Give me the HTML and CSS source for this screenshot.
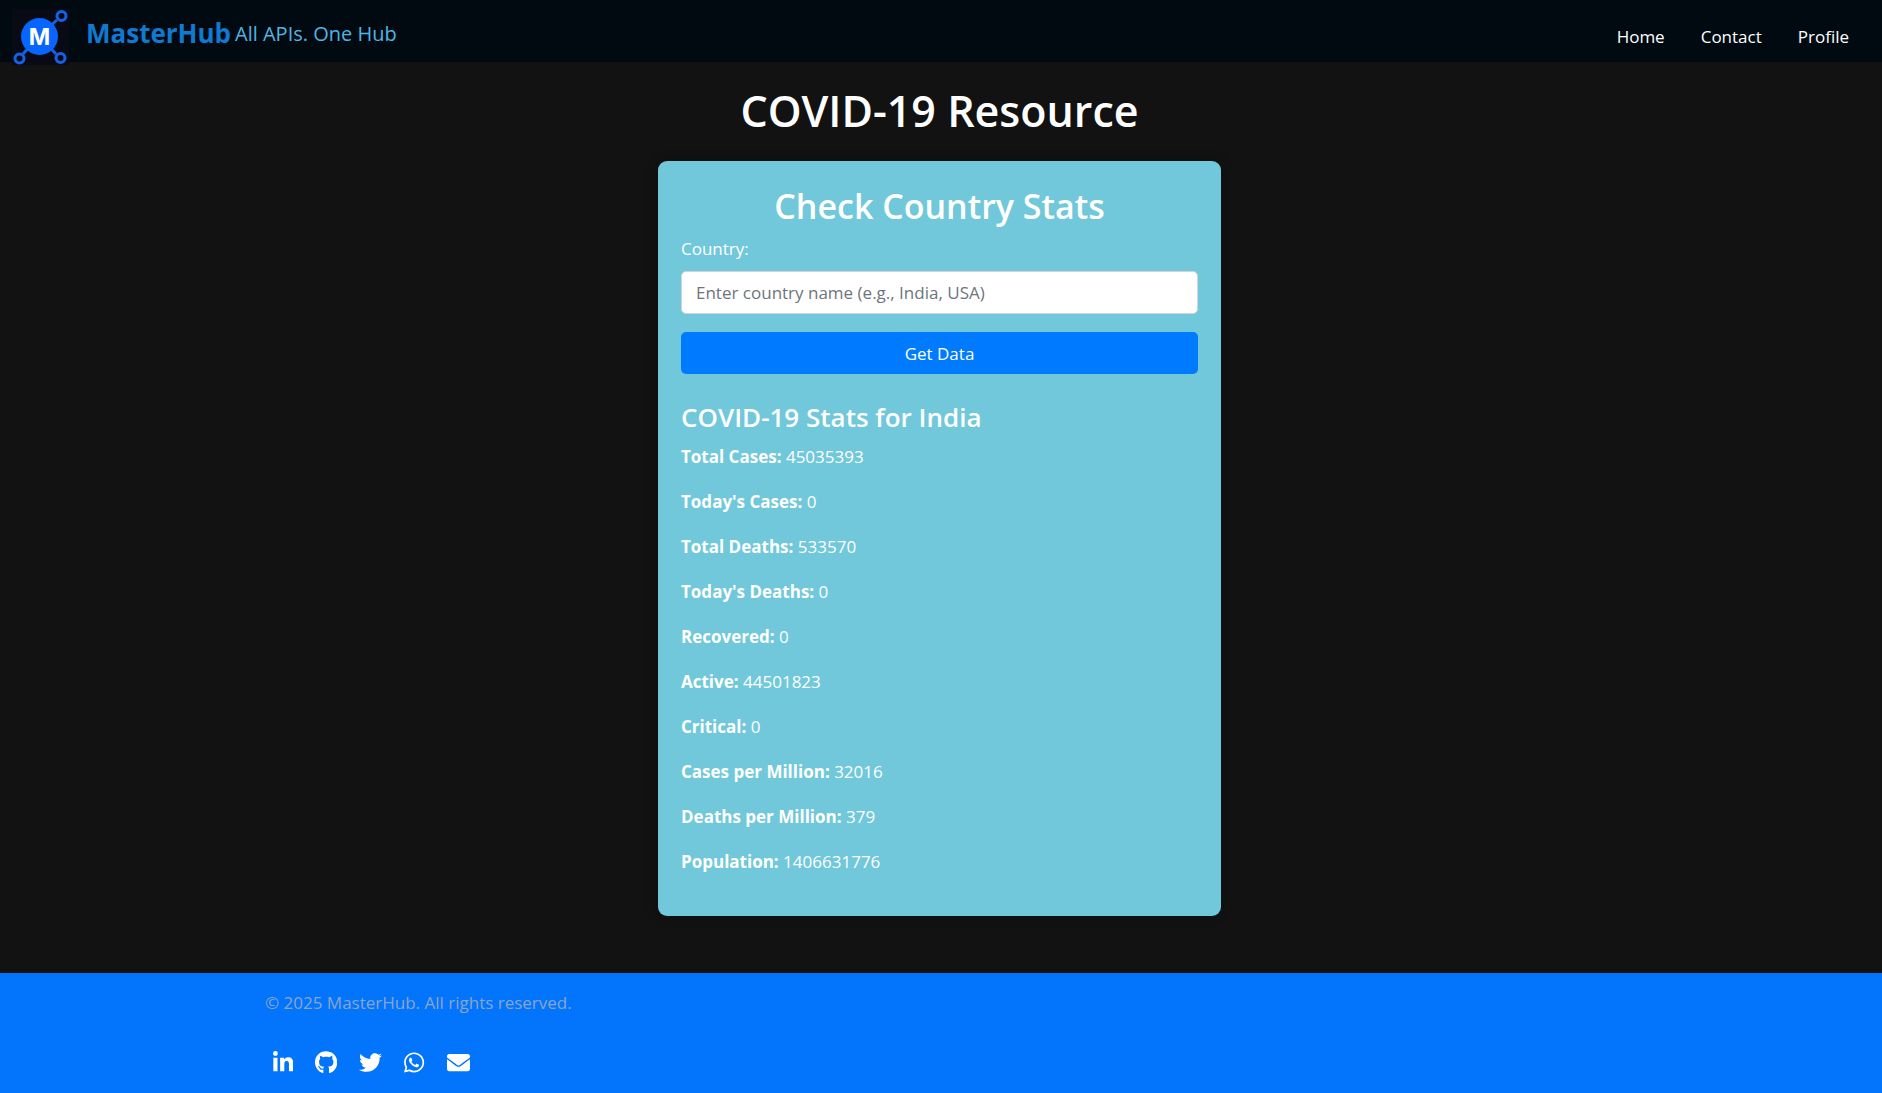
FILE: index.html
```html
<!DOCTYPE html>
<html lang="en">
<head>
<meta charset="utf-8">
<meta name="viewport" content="width=device-width, initial-scale=1">
<title>COVID-19 Resource - MasterHub</title>
<link rel="stylesheet" href="styles.css">
</head>
<body>
<header class="navbar">
  <a class="brand" href="#">
    <svg class="logo" viewBox="0 0 57 56" aria-hidden="true">
      <rect width="57" height="56" fill="#080b15"/>
      <g fill="none" stroke="#1562e8" stroke-width="3">
        <path d="M27 27 45 11M27 27 11 45M27 27 44 45"/>
        <g fill="#080b15"><circle cx="49.500" cy="7" r="4.500"/><circle cx="7.500" cy="49.500" r="4.500"/><circle cx="48.500" cy="49" r="4.500"/></g>
      </g>
      <circle cx="27.500" cy="27.500" r="18.500" fill="#0666ff"/>
      <text class="logo-letter" x="27.500" y="36" text-anchor="middle">M</text>
    </svg>
    <span class="brand-name">MasterHub</span>
    <span class="tagline">All APIs. One Hub</span>
  </a>
  <nav class="links">
    <a href="#">Home</a>
    <a href="#">Contact</a>
    <a href="#">Profile</a>
  </nav>
</header>

<main class="page">
  <h1 class="title">COVID-19 Resource</h1>
  <section class="card">
    <h2 class="card-title">Check Country Stats</h2>
    <form class="form">
      <label class="label" for="country">Country:</label>
      <input class="input" id="country" type="text" placeholder="Enter country name (e.g., India, USA)">
      <button class="button" type="button">Get Data</button>
    </form>
    <h4 class="stats-title">COVID-19 Stats for India</h4>
    <div class="stats">
      <p><strong>Total Cases:</strong> 45035393</p>
      <p><strong>Today's Cases:</strong> 0</p>
      <p><strong>Total Deaths:</strong> 533570</p>
      <p><strong>Today's Deaths:</strong> 0</p>
      <p><strong>Recovered:</strong> 0</p>
      <p><strong>Active:</strong> 44501823</p>
      <p><strong>Critical:</strong> 0</p>
      <p><strong>Cases per Million:</strong> 32016</p>
      <p><strong>Deaths per Million:</strong> 379</p>
      <p><strong>Population:</strong> 1406631776</p>
    </div>
  </section>
</main>

<footer class="footer">
  <div class="footer-inner">
    <p class="copyright">© 2025 MasterHub. All rights reserved.</p>
    <div class="social">
      <a href="#" aria-label="LinkedIn"><svg viewBox="0 0 448 512"><path d="M100.280 448H7.400V148.900h92.880zM53.790 108.100C24.090 108.100 0 83.500 0 53.800a53.790 53.790 0 0 1 107.580 0c0 29.700-24.100 54.300-53.790 54.300zM447.900 448h-92.680V302.400c0-34.700-.7-79.200-48.290-79.200-48.290 0-55.690 37.700-55.690 76.700V448h-92.780V148.900h89.080v40.800h1.300c12.400-23.500 42.690-48.300 87.880-48.300 94 0 111.280 61.900 111.280 142.300V448z"/></svg></a>
      <a href="#" aria-label="GitHub"><svg viewBox="0 0 496 512"><path d="M165.900 397.400c0 2-2.300 3.600-5.200 3.600-3.300.3-5.600-1.300-5.600-3.600 0-2 2.300-3.600 5.200-3.600 3-.3 5.600 1.300 5.600 3.600zm-31.100-4.500c-.7 2 1.300 4.300 4.300 4.900 2.600 1 5.600 0 6.200-2s-1.300-4.300-4.300-5.200c-2.600-.7-5.500.3-6.200 2.300zm44.200-1.700c-2.900.7-4.900 2.600-4.600 4.900.3 2 2.900 3.300 5.900 2.600 2.900-.7 4.900-2.600 4.600-4.600-.3-1.900-3-3.200-5.900-2.900zM244.800 8C106.100 8 0 113.300 0 252c0 110.900 69.800 205.800 169.500 239.200 12.800 2.300 17.300-5.600 17.300-12.100 0-6.200-.3-40.400-.3-61.400 0 0-70 15-84.700-29.800 0 0-11.400-29.100-27.800-36.600 0 0-22.900-15.700 1.600-15.400 0 0 24.900 2 38.600 25.800 21.900 38.600 58.600 27.500 72.900 20.900 2.300-16 8.800-27.100 16-33.700-55.900-6.200-112.300-14.300-112.300-110.500 0-27.500 7.600-41.300 23.600-58.900-2.600-6.500-11.100-33.300 2.600-67.900 20.900-6.500 69 27 69 27 20-5.600 41.500-8.500 62.800-8.500s42.800 2.900 62.800 8.500c0 0 48.100-33.600 69-27 13.700 34.700 5.200 61.400 2.600 67.900 16 17.700 25.800 31.500 25.800 58.900 0 96.500-58.900 104.200-114.800 110.500 9.200 7.900 17 22.900 17 46.400 0 33.700-.3 75.400-.3 83.600 0 6.500 4.600 14.400 17.300 12.100C428.200 457.800 496 362.900 496 252 496 113.300 383.500 8 244.800 8z"/></svg></a>
      <a href="#" aria-label="Twitter"><svg viewBox="0 0 512 512"><path d="M459.370 151.716c.325 4.548.325 9.097.325 13.645 0 138.720-105.583 298.558-298.558 298.558-59.452 0-114.680-17.219-161.137-47.106 8.447.974 16.568 1.299 25.340 1.299 49.055 0 94.213-16.568 130.274-44.832-46.132-.975-84.792-31.188-98.112-72.772 6.498.974 12.995 1.624 19.818 1.624 9.421 0 18.843-1.300 27.614-3.573-48.081-9.747-84.143-51.980-84.143-102.985v-1.299c13.969 7.797 30.214 12.670 47.431 13.319-28.264-18.843-46.781-51.005-46.781-87.391 0-19.492 5.197-37.360 14.294-52.954 51.655 63.675 129.300 105.258 216.365 109.807-1.624-7.797-2.599-15.918-2.599-24.040 0-57.828 46.782-104.934 104.934-104.934 30.213 0 57.502 12.670 76.670 33.137 23.715-4.548 46.456-13.320 66.599-25.340-7.798 24.366-24.366 44.833-46.132 57.827 21.117-2.273 41.584-8.122 60.426-16.243-14.292 20.791-32.161 39.308-52.628 54.253z"/></svg></a>
      <a href="#" aria-label="WhatsApp"><svg viewBox="0 0 448 512"><path d="M380.900 97.100C339 55.100 283.200 32 223.900 32c-122.400 0-222 99.600-222 222 0 39.100 10.200 77.300 29.600 111L0 480l117.700-30.900c32.400 17.700 68.900 27 106.100 27h.1c122.300 0 224.100-99.600 224.100-222 0-59.300-25.200-115-67.100-157zm-157 341.600c-33.200 0-65.700-8.900-94-25.700l-6.700-4-69.800 18.300L72 359.200l-4.400-7c-18.500-29.400-28.200-63.300-28.200-98.200 0-101.700 82.800-184.500 184.600-184.500 49.300 0 95.600 19.200 130.400 54.100 34.800 34.900 56.200 81.200 56.100 130.500 0 101.800-84.900 184.600-186.600 184.600zm101.200-138.200c-5.500-2.800-32.800-16.200-37.900-18-5.100-1.900-8.800-2.800-12.500 2.800-3.700 5.600-14.300 18-17.600 21.800-3.200 3.700-6.500 4.200-12 1.400-32.600-16.300-54-29.100-75.500-66-5.700-9.800 5.700-9.100 16.300-30.300 1.800-3.700.9-6.900-.5-9.700-1.400-2.800-12.500-30.100-17.100-41.200-4.500-10.800-9.100-9.300-12.500-9.500-3.200-.2-6.900-.2-10.600-.2-3.700 0-9.700 1.400-14.800 6.900-5.100 5.600-19.400 19-19.400 46.300 0 27.300 19.900 53.700 22.600 57.400 2.800 3.700 39.100 59.700 94.800 83.800 35.200 15.200 49 16.500 66.600 13.900 10.700-1.600 32.800-13.400 37.400-26.400 4.600-13 4.600-24.100 3.200-26.400-1.300-2.500-5-3.900-10.500-6.600z"/></svg></a>
      <a href="#" aria-label="Email"><svg viewBox="0 0 512 512"><path d="M502.300 190.800c3.900-3.100 9.700-.2 9.700 4.700V400c0 26.500-21.500 48-48 48H48c-26.500 0-48-21.500-48-48V195.600c0-5 5.700-7.800 9.700-4.700 22.400 17.400 52.100 39.500 154.100 113.600 21.100 15.400 56.700 47.800 92.200 47.600 35.700.3 72-32.800 92.300-47.600 102-74.100 131.600-96.300 154-113.700zM256 320c23.200.4 56.600-29.200 73.400-41.400 132.700-96.300 142.800-104.700 173.400-128.700 5.800-4.500 9.200-11.500 9.200-18.900v-19c0-26.500-21.500-48-48-48H48c-26.500 0-48 21.500-48 48v19c0 7.400 3.400 14.300 9.200 18.900 30.600 23.900 40.700 32.400 173.400 128.700 16.800 12.200 50.200 41.800 73.400 41.400z"/></svg></a>
    </div>
  </div>
</footer>
</body>
</html>
```
FILE: styles.css
```css
* {
  box-sizing: border-box;
}

body {
  display: flex;
  flex-direction: column;
  min-height: 100vh;
  margin: 0;
  background: #121212;
  color: #fff;
  font-family: "Segoe UI", "Open Sans", "Noto Sans", sans-serif;
  font-size: 17px;
  line-height: 27px;
}

h1, h2, h4, p {
  margin: 0;
}

a {
  color: inherit;
  text-decoration: none;
}

.navbar {
  display: flex;
  justify-content: space-between;
  align-items: center;
  height: 62px;
  padding: 0 33px 0 12px;
  background: #000a10;
}

.brand {
  display: flex;
  align-items: center;
}

.logo {
  width: 57px;
  height: 56px;
  margin: 12px 17px 0 0;
}

.logo-letter {
  fill: #fff;
  font-family: Inter, "Open Sans", sans-serif;
  font-size: 23px;
  font-weight: 700;
}

.brand-name,
.tagline {
  padding-top: 5px;
}

.brand-name {
  color: #1079d2;
  font-size: 26px;
  font-weight: 700;
}

.tagline {
  margin-left: 4px;
  color: #50b4e4;
  font-size: 20px;
}

.links {
  display: flex;
  gap: 36px;
  padding-top: 10px;
}

.page {
  flex: 1;
  display: flex;
  flex-direction: column;
  align-items: center;
  padding: 22px 25px 57px 22px;
}

.title {
  margin-bottom: 23px;
  font-size: 43px;
  font-weight: 600;
  line-height: 54px;
}

.card {
  width: 100%;
  max-width: 563px;
  padding: 23px;
  border-radius: 9px;
  background: #70c8da;
  box-shadow: 0 0 12px rgba(0, 0, 0, 0.3);
}

.card-title {
  margin-bottom: 7px;
  font-size: 34px;
  font-weight: 600;
  line-height: 44px;
  text-align: center;
}

.form {
  display: flex;
  flex-direction: column;
  margin-bottom: 27px;
}

.label {
  margin-bottom: 9px;
}

.input,
.button {
  padding: 0 14px;
  border-radius: 5px;
  font: inherit;
}

.input {
  height: 43px;
  margin-bottom: 18px;
  border: 1px solid #ced4da;
  background: #fff;
  color: #495057;
}

.input::placeholder {
  color: #6c757d;
  opacity: 1;
}

.button {
  height: 42px;
  border: 0;
  background: #007bff;
  color: #fff;
}

.stats-title {
  margin-bottom: 9px;
  font-size: 26px;
  font-weight: 600;
  line-height: 33px;
}

.stats {
  display: grid;
  gap: 18px;
  padding-bottom: 18px;
}

.footer {
  padding: 16px 22px 14px;
  background: #0275fc;
}

.footer-inner {
  max-width: 1352px;
  margin: 0 auto;
}

.copyright {
  margin-bottom: 27px;
  color: #8ba5c8;
}

.social {
  display: flex;
  gap: 22px;
  padding: 0 8px;
}

.social a {
  display: flex;
  padding: 8px 0 7px;
}

.social svg {
  height: 23px;
  fill: #fff;
}
```
